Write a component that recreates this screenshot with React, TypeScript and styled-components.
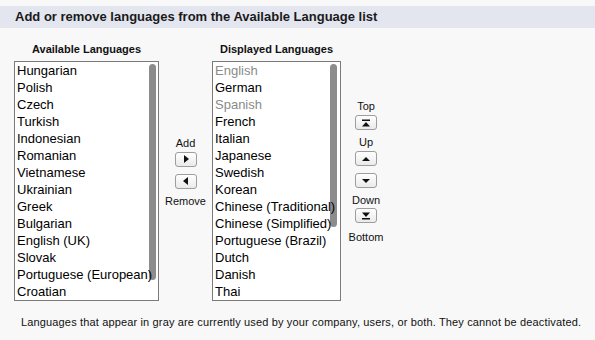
import React from "react";
import styled, { createGlobalStyle } from "styled-components";

const GlobalStyle = createGlobalStyle`
  html, body {
    margin: 0;
    padding: 0;
    background: #f8f8f8;
  }
  body {
    font-family: "Liberation Sans", Arial, Helvetica, sans-serif;
    color: #000;
  }
`;

const Page = styled.div`
  width: 595px;
  height: 340px;
  padding-top: 6px;
  box-sizing: border-box;
  background: #f8f8f8;
`;

const SectionHeader = styled.h2`
  margin: 0;
  height: 22px;
  line-height: 22px;
  padding-left: 15px;
  background: #e4e6ef;
  font-size: 13px;
  font-weight: bold;
  color: #1a1a1a;
`;

const Editor = styled.div`
  display: flex;
  align-items: center;
  padding: 15px 0 0 14px;
`;

const ListColumn = styled.div<{ $width: number }>`
  display: flex;
  flex-direction: column;
  width: ${(p) => p.$width}px;
`;

const ColumnTitle = styled.div`
  text-align: center;
  font-size: 11px;
  font-weight: bold;
  line-height: 13px;
  margin-bottom: 5px;
  color: #111;
`;

const ListBox = styled.div`
  position: relative;
  height: 240px;
  box-sizing: border-box;
  border: 1px solid #7b7b7b;
  background: #fff;
  overflow: hidden;
`;

const Option = styled.div<{ $muted?: boolean }>`
  font-size: 13px;
  line-height: 17px;
  height: 17px;
  padding-left: 2px;
  white-space: nowrap;
  color: ${(p) => (p.$muted ? "#8a8a8a" : "#000")};
`;

const ScrollThumb = styled.div<{ $height: number; $right: number }>`
  position: absolute;
  top: 2px;
  right: ${(p) => p.$right}px;
  width: 7px;
  height: ${(p) => p.$height}px;
  border-radius: 4px;
  background: rgba(0, 0, 0, 0.45);
`;

const ControlColumn = styled.div<{ $width: number }>`
  display: flex;
  flex-direction: column;
  align-items: center;
  width: ${(p) => p.$width}px;
`;

const ControlLabel = styled.div<{ $top?: number }>`
  font-size: 11px;
  line-height: 13px;
  color: #111;
  margin-top: ${(p) => p.$top ?? 0}px;
`;

const ArrowButton = styled.button<{ $top?: number }>`
  display: flex;
  align-items: center;
  justify-content: center;
  width: 22px;
  height: 15px;
  margin-top: ${(p) => p.$top ?? 0}px;
  padding: 0;
  border: 1px solid #9d9d9d;
  border-radius: 3px;
  background: linear-gradient(#ffffff, #eaeaea);
  box-sizing: border-box;
  cursor: pointer;
`;

const Note = styled.p`
  margin: 15px 0 0 21px;
  font-size: 11px;
  line-height: 13px;
  letter-spacing: 0.15px;
  color: #111;
`;

type IconKind = "right" | "left" | "top" | "up" | "down" | "bottom";

const Icon = ({ kind }: { kind: IconKind }) => {
  const shapes: Record<IconKind, React.ReactNode> = {
    right: <polygon points="3,1 8,5 3,9" />,
    left: <polygon points="7,1 2,5 7,9" />,
    up: <polygon points="1,7 9,7 5,3" />,
    down: <polygon points="1,3 9,3 5,7" />,
    top: (
      <>
        <rect x="1" y="1.5" width="8" height="1.5" />
        <polygon points="1,8.5 9,8.5 5,4" />
      </>
    ),
    bottom: (
      <>
        <polygon points="1,1.5 9,1.5 5,6" />
        <rect x="1" y="7" width="8" height="1.5" />
      </>
    ),
  };
  return (
    <svg width="10" height="10" viewBox="0 0 10 10" fill="#111">
      {shapes[kind]}
    </svg>
  );
};

const available = [
  "Hungarian",
  "Polish",
  "Czech",
  "Turkish",
  "Indonesian",
  "Romanian",
  "Vietnamese",
  "Ukrainian",
  "Greek",
  "Bulgarian",
  "English (UK)",
  "Slovak",
  "Portuguese (European)",
  "Croatian",
];

const displayed: { name: string; muted?: boolean }[] = [
  { name: "English", muted: true },
  { name: "German" },
  { name: "Spanish", muted: true },
  { name: "French" },
  { name: "Italian" },
  { name: "Japanese" },
  { name: "Swedish" },
  { name: "Korean" },
  { name: "Chinese (Traditional)" },
  { name: "Chinese (Simplified)" },
  { name: "Portuguese (Brazil)" },
  { name: "Dutch" },
  { name: "Danish" },
  { name: "Thai" },
];

export default function App() {
  return (
    <>
      <GlobalStyle />
      <Page>
        <SectionHeader>Add or remove languages from the Available Language list</SectionHeader>
        <Editor>
          <ListColumn $width={145}>
            <ColumnTitle>Available Languages</ColumnTitle>
            <ListBox role="listbox" aria-label="Available Languages">
              {available.map((l) => (
                <Option role="option" key={l}>
                  {l}
                </Option>
              ))}
              <ScrollThumb $height={216} $right={2} />
            </ListBox>
          </ListColumn>

          <ControlColumn $width={53}>
            <ControlLabel>Add</ControlLabel>
            <ArrowButton $top={2} aria-label="Add">
              <Icon kind="right" />
            </ArrowButton>
            <ArrowButton $top={7} aria-label="Remove">
              <Icon kind="left" />
            </ArrowButton>
            <ControlLabel $top={6}>Remove</ControlLabel>
          </ControlColumn>

          <ListColumn $width={129}>
            <ColumnTitle>Displayed Languages</ColumnTitle>
            <ListBox role="listbox" aria-label="Displayed Languages">
              {displayed.map((l) => (
                <Option role="option" key={l.name} $muted={l.muted}>
                  {l.name}
                </Option>
              ))}
              <ScrollThumb $height={163} $right={3} />
            </ListBox>
          </ListColumn>

          <ControlColumn $width={50}>
            <ControlLabel>Top</ControlLabel>
            <ArrowButton $top={2} aria-label="Top">
              <Icon kind="top" />
            </ArrowButton>
            <ControlLabel $top={6}>Up</ControlLabel>
            <ArrowButton $top={2} aria-label="Up">
              <Icon kind="up" />
            </ArrowButton>
            <ArrowButton $top={7} aria-label="Down">
              <Icon kind="down" />
            </ArrowButton>
            <ControlLabel $top={6}>Down</ControlLabel>
            <ArrowButton $top={1} aria-label="Bottom">
              <Icon kind="bottom" />
            </ArrowButton>
            <ControlLabel $top={8}>Bottom</ControlLabel>
          </ControlColumn>
        </Editor>
        <Note>
          Languages that appear in gray are currently used by your company, users, or both. They cannot be
          deactivated.
        </Note>
      </Page>
    </>
  );
}
